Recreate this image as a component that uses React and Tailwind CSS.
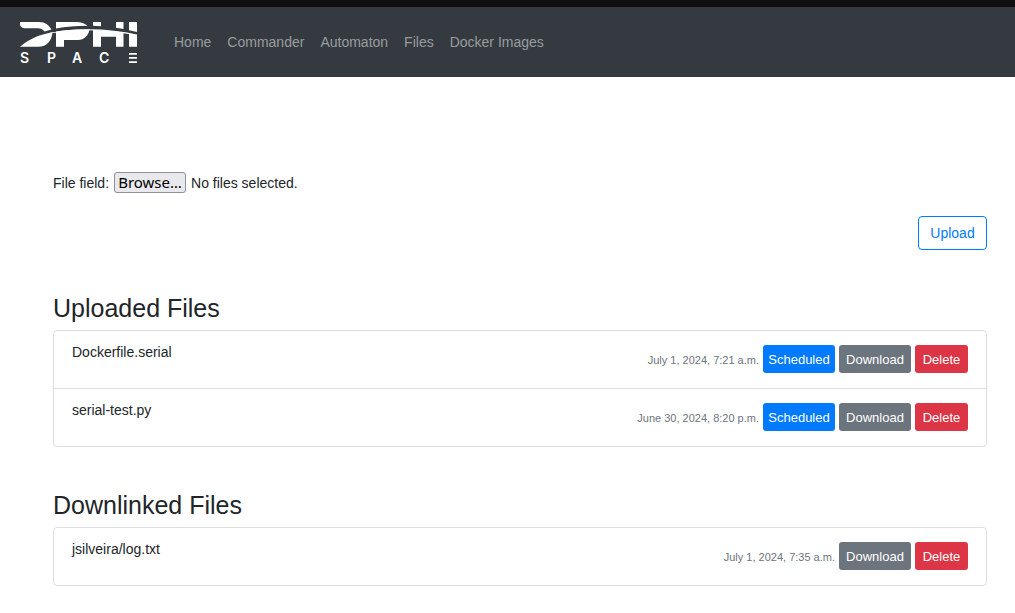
import { useRef, useState } from "react";

const NAV_LINKS = ["Home", "Commander", "Automaton", "Files", "Docker Images"];

const UPLOADED = [
  { name: "Dockerfile.serial", date: "July 1, 2024, 7:21 a.m.", scheduled: true },
  { name: "serial-test.py", date: "June 30, 2024, 8:20 p.m.", scheduled: true },
];

const DOWNLINKED = [{ name: "jsilveira/log.txt", date: "July 1, 2024, 7:35 a.m." }];

function Logo() {
  return (
    <svg
      width="118"
      height="52"
      viewBox="0 -6 118 52"
      fill="#fff"
      className="overflow-visible"
      role="img"
      aria-label="DPHI Space"
    >
      {/* parts above the arc */}
      <path d="M0 0H19C25 0 29 3 31.500 7.500L24.500 9.500C22.500 7.500 21 6.300 18 6.300H5.500C2.500 6.300 0 5 0 2Z" />
      <path d="M36 0H56C61 0 65 1.500 67.500 3.700C56 3.800 46 4.800 36 6.400Z" />
      <path d="M73 0H81V4.200L73 3.800Z" />
      <path d="M96 0H103.500V7L96 5.700Z" />
      <path d="M109 0H117V10L109 8.200Z" />
      {/* arc and the parts below it */}
      <path d="M0 24.700C9 17 19 12.500 32.500 10.200C31.500 19 27 24.700 18 24.700Z" />
      <path d="M30 10.700C60 5.200 91 6.500 117 12.600V13.600C107 11.400 97 10 87 9.200C67 7.400 48 8.200 30 11.600Z" />
      <path d="M36 9.500C47 7.700 58 7.300 69.500 7.600C68.500 14 64 18 58 18H44V24.700H36Z" />
      <path d="M73 7.800C83 8.200 93 9.200 103.500 10.600V24.700H96V14.700H81V24.700H73Z" />
      <path d="M109 11.300L117 13V24.700H109Z" />
      <g fontFamily="Inter, sans-serif" fontSize="14" fontWeight="600">
        <text x="0" y="41">S</text>
        <text x="27" y="41">P</text>
        <text x="52" y="41">A</text>
        <text x="79" y="41">C</text>
      </g>
      <path d="M109 31h8v1.700h-8zM109 35.100h8v1.700h-8zM109 39.200h8v1.700h-8z" />
    </svg>
  );
}

function FileRow({ file }) {
  return (
    <li className="flex items-start justify-between gap-4 px-[18px] pt-[14px] pb-[15px]">
      <span className="-mt-1 text-[14px] leading-[22px]">{file.name}</span>
      <div className="flex flex-wrap items-center justify-end gap-1 text-[13px] leading-[18px] text-white">
        <small className="pt-0.5 text-[11px] text-[#6c757d]">{file.date}</small>
        {file.scheduled && (
          <button type="button" className="w-[72px] rounded-[3px] bg-[#007bff] pt-[6px] pb-1 text-center">
            Scheduled
          </button>
        )}
        <button type="button" className="w-[72px] rounded-[3px] bg-[#6c757d] pt-[6px] pb-1 text-center">
          Download
        </button>
        <button type="button" className="w-[53px] rounded-[3px] bg-[#dc3545] pt-[6px] pb-1 text-center">
          Delete
        </button>
      </div>
    </li>
  );
}

function FileSection({ title, files }) {
  return (
    <section className="mt-[43px]">
      <h3 className="mb-[7px] text-[25px] leading-[30px]">{title}</h3>
      <ul className="divide-y divide-[#dfdfdf] rounded-[4px] border border-[#dfdfdf]">
        {files.map((file) => (
          <FileRow key={file.name} file={file} />
        ))}
      </ul>
    </section>
  );
}

export default function App() {
  const input = useRef(null);
  const [fileName, setFileName] = useState("No files selected.");

  return (
    <div className="bg-white font-['Liberation_Sans',Arial,sans-serif] text-[14px] leading-[22px] text-[#212529]">
      <header className="border-t-[7px] border-[#0f0f0f] bg-[#343a40]">
        <nav className="flex h-[70px] items-center gap-9 px-5">
          <a href="#home">
            <Logo />
          </a>
          <ul className="flex gap-4 text-[#999c9f]">
            {NAV_LINKS.map((link) => (
              <li key={link}>
                <a href="#nav">{link}</a>
              </li>
            ))}
          </ul>
        </nav>
      </header>

      <main className="pt-[95px] pr-7 pb-7 pl-[53px]">
        <form onSubmit={(event) => event.preventDefault()}>
          <div className="flex items-start gap-[5px]">
            <label htmlFor="file">File field:</label>
            <input
              ref={input}
              id="file"
              type="file"
              className="sr-only"
              onChange={(event) => setFileName(event.target.files[0]?.name ?? "No files selected.")}
            />
            <button
              type="button"
              onClick={() => input.current.click()}
              className="h-[21px] w-[72px] rounded-[3px] border border-[#8f8f9d] bg-[#e9e9ed] text-center font-['Noto_Sans',sans-serif] text-[15px] leading-[19px] text-black"
            >
              Browse…
            </button>
            <span>{fileName}</span>
          </div>
          <div className="mt-[22px] flex justify-end">
            <button
              type="submit"
              className="h-[34px] w-[69px] rounded-[4px] border border-[#007bff] text-center text-[#007bff]"
            >
              Upload
            </button>
          </div>
        </form>

        <FileSection title="Uploaded Files" files={UPLOADED} />
        <FileSection title="Downlinked Files" files={DOWNLINKED} />
      </main>
    </div>
  );
}
